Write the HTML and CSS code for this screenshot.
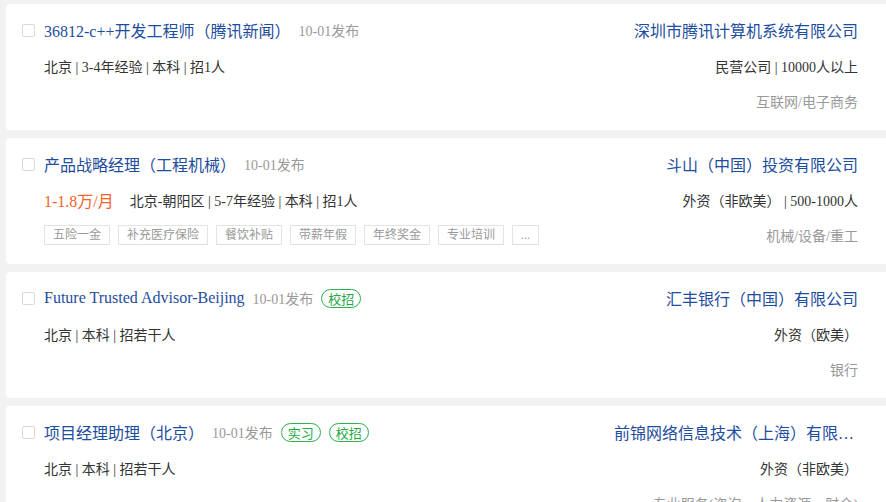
FILE: index.html
```html
<!DOCTYPE html>
<html lang="zh-CN">
<head>
<meta charset="utf-8">
<title>职位列表</title>
<link rel="stylesheet" href="styles.css">
</head>
<body>
<div class="list">
  <div class="card">
    <div class="left">
      <div class="row r1">
        <span class="check"></span>
        <a class="title">36812-c++开发工程师（腾讯新闻）</a>
        <span class="date">10-01发布</span>
      </div>
      <div class="row r2 ind">
        <span class="info">北京 | 3-4年经验 | 本科 | 招1人</span>
      </div>
      <div class="row r3 ind"></div>
    </div>
    <div class="right">
      <div class="row r1"><a class="company">深圳市腾讯计算机系统有限公司</a></div>
      <div class="row r2"><span class="info">民营公司 | 10000人以上</span></div>
      <div class="row r3"><span class="industry">互联网/电子商务</span></div>
    </div>
  </div>

  <div class="card">
    <div class="left">
      <div class="row r1">
        <span class="check"></span>
        <a class="title">产品战略经理（工程机械）</a>
        <span class="date">10-01发布</span>
      </div>
      <div class="row r2 ind">
        <span class="salary">1-1.8万/月</span>
        <span class="info">北京-朝阳区 | 5-7年经验 | 本科 | 招1人</span>
      </div>
      <div class="row r3 ind tags">
        <span class="tag">五险一金</span>
        <span class="tag">补充医疗保险</span>
        <span class="tag">餐饮补贴</span>
        <span class="tag">带薪年假</span>
        <span class="tag">年终奖金</span>
        <span class="tag">专业培训</span>
        <span class="tag more">...</span>
      </div>
    </div>
    <div class="right">
      <div class="row r1"><a class="company">斗山（中国）投资有限公司</a></div>
      <div class="row r2"><span class="info">外资（非欧美） | 500-1000人</span></div>
      <div class="row r3"><span class="industry">机械/设备/重工</span></div>
    </div>
  </div>

  <div class="card">
    <div class="left">
      <div class="row r1">
        <span class="check"></span>
        <a class="title">Future Trusted Advisor-Beijing</a>
        <span class="date">10-01发布</span>
        <span class="badge">校招</span>
      </div>
      <div class="row r2 ind">
        <span class="info">北京 | 本科 | 招若干人</span>
      </div>
      <div class="row r3 ind"></div>
    </div>
    <div class="right">
      <div class="row r1"><a class="company">汇丰银行（中国）有限公司</a></div>
      <div class="row r2"><span class="info">外资（欧美）</span></div>
      <div class="row r3"><span class="industry">银行</span></div>
    </div>
  </div>

  <div class="card">
    <div class="left">
      <div class="row r1">
        <span class="check"></span>
        <a class="title">项目经理助理（北京）</a>
        <span class="date">10-01发布</span>
        <span class="badge">实习</span>
        <span class="badge">校招</span>
      </div>
      <div class="row r2 ind">
        <span class="info">北京 | 本科 | 招若干人</span>
      </div>
      <div class="row r3 ind"></div>
    </div>
    <div class="right">
      <div class="row r1"><a class="company">前锦网络信息技术（上海）有限公司</a></div>
      <div class="row r2"><span class="info">外资（非欧美）</span></div>
      <div class="row r3"><span class="industry">专业服务(咨询、人力资源、财会)</span></div>
    </div>
  </div>
</div>
</body>
</html>
```

FILE: styles.css
```css
html, body {
  margin: 0;
  padding: 0;
  background: #f2f2f2;
}

body {
  font-family: "Liberation Serif", "Noto Sans CJK SC", serif;
  color: #333;
  overflow: hidden;
}

.list {
  display: flex;
  flex-direction: column;
  gap: 8px;
  padding: 4px 0 0 6px;
}

.card {
  display: flex;
  justify-content: space-between;
  background: #fff;
  border-radius: 4px 0 0 4px;
  height: 126px;
  box-sizing: border-box;
  padding: 14px 28px 0 16px;
}

.left, .right {
  display: flex;
  flex-direction: column;
  gap: 11.5px;
}

.right {
  align-items: flex-end;
  text-align: right;
}

.row {
  height: 24px;
  display: flex;
  align-items: center;
  white-space: nowrap;
}

.ind {
  padding-left: 22px;
}

.check {
  width: 11px;
  height: 11px;
  border: 1px solid #d9d9d9;
  border-radius: 2px;
  margin-right: 9px;
  flex: none;
}

.title {
  font-size: 16px;
  color: #1d4d9e;
  margin-right: 8px;
}

.date {
  font-size: 14px;
  color: #999;
  margin-right: 8px;
}

.badge {
  box-sizing: border-box;
  height: 19px;
  line-height: 17px;
  padding: 0 6px;
  border: 1px solid #2bb24c;
  border-radius: 10px;
  color: #22a846;
  font-size: 13px;
  font-family: "Noto Sans CJK SC", sans-serif;
  margin-right: 8px;
}

.info {
  font-size: 14px;
  color: #333;
}

.salary {
  font-size: 16px;
  color: #f5632a;
  margin-right: 16px;
}

.tags {
  gap: 8px;
}

.tag {
  box-sizing: border-box;
  height: 20px;
  line-height: 18px;
  padding: 0 8px;
  border: 1px solid #e3e3e3;
  font-size: 12px;
  color: #999;
}

.company {
  font-size: 16px;
  color: #1d4d9e;
  max-width: 244px;
  overflow: hidden;
  text-overflow: ellipsis;
  white-space: nowrap;
}

.industry {
  font-size: 14px;
  color: #999;
}
```
